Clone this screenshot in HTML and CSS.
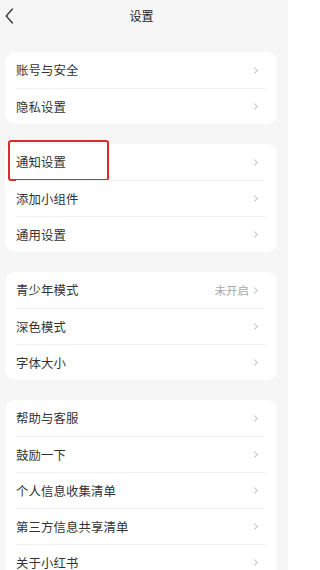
FILE: index.html
```html
<!DOCTYPE html>
<html lang="zh">
<head>
<meta charset="utf-8">
<title>设置</title>
<link rel="stylesheet" href="styles.css">
</head>
<body>
<div class="screen">
  <header class="topbar">
    <span class="back"><svg width="9" height="16" viewBox="0 0 9 16"><polyline points="7.5,1 1.2,8 7.5,15" fill="none" stroke="#333" stroke-width="1.3" stroke-linecap="round" stroke-linejoin="round"/></svg></span>
    <h1 class="title">设置</h1>
  </header>

  <section class="card">
    <div class="row"><span class="label">账号与安全</span><span class="chev"></span></div>
    <div class="row"><span class="label">隐私设置</span><span class="chev"></span></div>
  </section>

  <section class="card">
    <div class="row"><span class="label">通知设置</span><span class="chev"></span><span class="highlight"></span></div>
    <div class="row"><span class="label">添加小组件</span><span class="chev"></span></div>
    <div class="row"><span class="label">通用设置</span><span class="chev"></span></div>
  </section>

  <section class="card">
    <div class="row"><span class="label">青少年模式</span><span class="value">未开启</span><span class="chev"></span></div>
    <div class="row"><span class="label">深色模式</span><span class="chev"></span></div>
    <div class="row"><span class="label">字体大小</span><span class="chev"></span></div>
  </section>

  <section class="card">
    <div class="row"><span class="label">帮助与客服</span><span class="chev"></span></div>
    <div class="row"><span class="label">鼓励一下</span><span class="chev"></span></div>
    <div class="row"><span class="label">个人信息收集清单</span><span class="chev"></span></div>
    <div class="row"><span class="label">第三方信息共享清单</span><span class="chev"></span></div>
    <div class="row"><span class="label">关于小红书</span><span class="chev"></span></div>
  </section>
</div>
</body>
</html>
```
FILE: styles.css
```css
html, body {
  margin: 0;
  padding: 0;
  background: #ffffff;
  height: 570px;
  overflow: hidden;
}
body {
  font-family: "Noto Sans CJK SC", "Noto Sans", sans-serif;
  color: #333333;
}
.screen {
  width: 288px;
  height: 570px;
  background: #f6f6f6;
  display: flex;
  flex-direction: column;
  gap: 20px;
  box-sizing: border-box;
  padding: 0 11px 0 5px;
  overflow: hidden;
}
.topbar {
  position: relative;
  height: 32px;
  display: flex;
  align-items: center;
  justify-content: center;
  margin: 0 0 0 -5px;
  padding-left: 0;
}
.back {
  position: absolute;
  left: 5px;
  top: 8px;
  width: 9px;
  height: 16px;
  display: block;
}
.back svg { display: block; }
.title {
  margin: 0;
  font-size: 12px;
  font-weight: 400;
  color: #222;
  line-height: 32px;
  transform: translateX(3px);
}
.card {
  background: #ffffff;
  border-radius: 10px;
  padding: 0 12px 0 11px;
  flex-shrink: 0;
}
.row {
  position: relative;
  height: 36px;
  display: flex;
  align-items: center;
  box-sizing: border-box;
}
.row + .row {
  border-top: 1px solid #f1f1f1;
}
.label {
  flex: 1;
  font-size: 12.4px;
  color: #333333;
  letter-spacing: 0.1px;
}
.value {
  font-size: 11.5px;
  color: #a8a8a8;
  margin-right: 3px;
}
.chev {
  width: 4px;
  height: 4px;
  border-top: 1.1px solid #c9c9c9;
  border-right: 1.1px solid #c9c9c9;
  transform: rotate(45deg);
  margin-right: 8px;
}
.highlight {
  position: absolute;
  left: -8.5px;
  top: -4px;
  width: 97px;
  height: 37px;
  border: 2px solid #e0292b;
  border-radius: 3px;
}
```
